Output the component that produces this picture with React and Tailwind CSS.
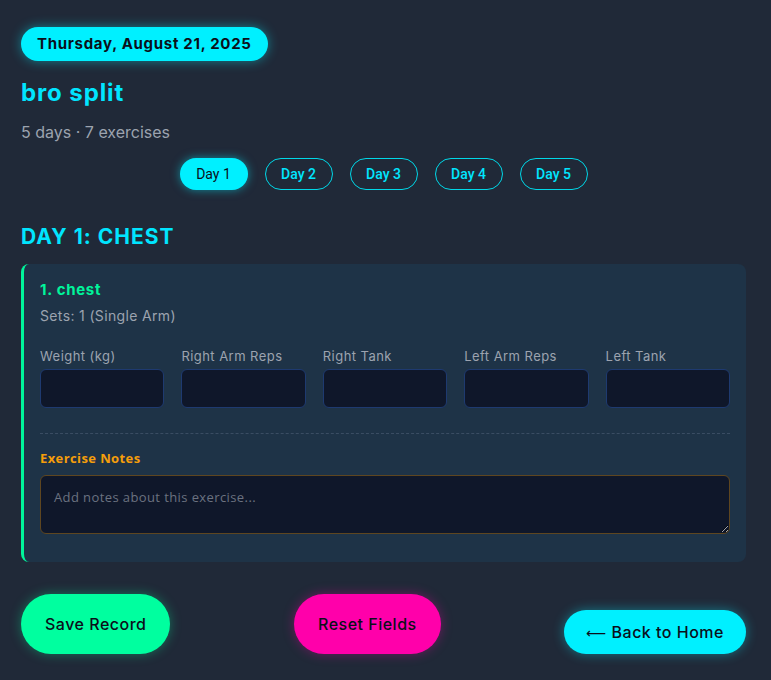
import { useState } from "react";

const days = ["Day 1", "Day 2", "Day 3", "Day 4", "Day 5"];
const fields = ["Weight (kg)", "Right Arm Reps", "Right Tank", "Left Arm Reps", "Left Tank"];

const App = () => {
    const [active, setActive] = useState(0);
    const [notes, setNotes] = useState("");

    return (
        <div className="min-h-screen bg-[#202938] text-white font-['Inter',sans-serif]">
            <div className="pl-[21px] pr-[25px] pt-[27px] pb-[26px]">
                <div className="inline-block rounded-full bg-[#00f0ff] px-[16px] py-[8px] text-[15px] leading-[18px] font-bold tracking-[0.7px] text-[#0b0f1a] shadow-[0_0_12px_rgba(0,240,255,0.45)]">
                    Thursday, August 21, 2025
                </div>
                <h1 className="mt-[17px] text-[24px] leading-[30px] font-bold tracking-[0.9px] text-[#00e5ff]">bro split</h1>
                <p className="mt-[14px] text-[16px] leading-[20px] text-[#9ca3af]">5 days · 7 exercises</p>

                <div className="mt-[16px] flex justify-center gap-[17px] font-['Roboto',sans-serif]">
                    {days.map((d, i) => (
                        <button
                            key={d}
                            onClick={() => setActive(i)}
                            className={
                                i === active
                                    ? "h-[32px] w-[68px] rounded-full bg-[#00f0ff] text-[14px] text-[#0b0f1a] shadow-[0_0_10px_rgba(0,240,255,0.5)]"
                                    : "h-[32px] w-[68px] rounded-full border border-[#00d8e8] text-[14px] font-medium text-[#00e5ff]"
                            }
                        >
                            {d}
                        </button>
                    ))}
                </div>

                <h2 className="mt-[34px] text-[21px] leading-[26px] font-bold uppercase tracking-[1px] text-[#00e5ff]">Day 1: Chest</h2>

                <div className="mt-[14px] rounded-lg border-l-[3px] border-[#00f59b] bg-[#1e3347] pl-[16px] pr-[16px] pt-[16px] pb-[28px]">
                    <h3 className="text-[15px] leading-[20px] font-bold tracking-[0.7px] text-[#00f59b]">1. chest</h3>
                    <p className="mt-[7px] text-[14px] leading-[18px] tracking-[0.35px] text-[#9ca3af]">Sets: 1 (Single Arm)</p>

                    <div className="mt-[23px] grid grid-cols-5 gap-[17px]">
                        {fields.map((f) => (
                            <div key={f} className="flex flex-col">
                                <label className="text-[13px] leading-[16px] tracking-[0.45px] text-[#9ca3af]">{f}</label>
                                <input
                                    type="text"
                                    className="mt-[5px] h-[39px] w-full rounded-md border border-[#1e3a70] bg-[#0f172a] px-2 text-white outline-none"
                                />
                            </div>
                        ))}
                    </div>

                    <div className="mt-[25px] border-t border-dashed border-[#3a4d63]" />

                    <label className="mt-[16px] block font-['Open_Sans',sans-serif] text-[13px] leading-[16px] font-bold tracking-[0.4px] text-[#f59e0b]">
                        Exercise Notes
                    </label>
                    <textarea
                        value={notes}
                        onChange={(e) => setNotes(e.target.value)}
                        placeholder="Add notes about this exercise..."
                        className="mt-[9px] block h-[59px] w-full rounded-md border border-[#5e4620] bg-[#0f172a] px-[13px] py-[12px] font-['Open_Sans',sans-serif] text-[13px] tracking-[0.4px] text-white placeholder-[#6b7280] outline-none"
                    />
                </div>

                <div className="mt-[32px] flex items-end justify-between">
                    <button className="h-[60px] rounded-full bg-[#00ff9f] px-[24px] text-[16px] font-medium tracking-[0.5px] text-[#0b0f1a] shadow-[0_0_12px_rgba(0,255,159,0.35)]">
                        Save Record
                    </button>
                    <button className="h-[60px] rounded-full bg-[#ff00aa] px-[24px] text-[16px] font-medium tracking-[0.5px] text-[#0b0f1a] shadow-[0_0_12px_rgba(255,0,170,0.35)]">
                        Reset Fields
                    </button>
                    <button className="h-[44px] rounded-full bg-[#00f0ff] px-[22px] text-[16px] font-medium tracking-[0.5px] text-[#0b0f1a] shadow-[0_0_12px_rgba(0,240,255,0.4)]">
                        <span className="font-['DejaVu_Sans',sans-serif] font-normal text-[14px]">⟵</span> Back to Home
                    </button>
                </div>
            </div>
        </div>
    );
};

export default App;
